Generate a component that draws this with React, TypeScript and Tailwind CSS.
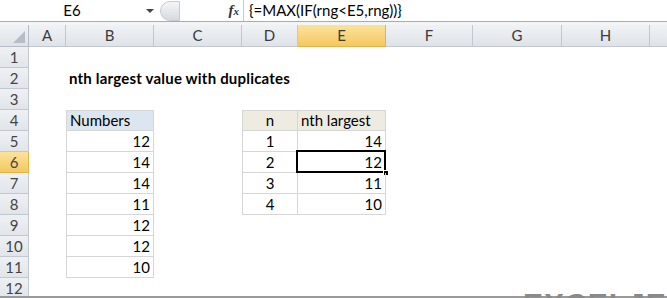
import React from "react";

const cols = [
  { id: "A", w: 37 },
  { id: "B", w: 88 },
  { id: "C", w: 88 },
  { id: "D", w: 56 },
  { id: "E", w: 88 },
  { id: "F", w: 87 },
  { id: "G", w: 89 },
  { id: "H", w: 88 },
  { id: "I", w: 60 },
];

const font = { fontFamily: "Lato, 'Open Sans', sans-serif" };

type CellDef = {
  text?: string;
  align?: "left" | "right" | "center";
  bold?: boolean;
  fill?: string;
  border?: boolean;
  first?: boolean; // left column of a table
  top?: boolean; // header row of a table
  active?: boolean;
};

// sheet contents, keyed by "col+row"
const cells: Record<string, CellDef> = {
  B2: { text: "nth largest value with duplicates", bold: true },
  B4: { text: "Numbers", fill: "bg-[#dce6f1]", border: true, first: true, top: true },
  B5: { text: "12", align: "right", border: true, first: true },
  B6: { text: "14", align: "right", border: true, first: true },
  B7: { text: "14", align: "right", border: true, first: true },
  B8: { text: "11", align: "right", border: true, first: true },
  B9: { text: "12", align: "right", border: true, first: true },
  B10: { text: "12", align: "right", border: true, first: true },
  B11: { text: "10", align: "right", border: true, first: true },
  D4: { text: "n", align: "center", fill: "bg-[#eeece1]", border: true, first: true, top: true },
  E4: { text: "nth largest", fill: "bg-[#eeece1]", border: true, top: true },
  D5: { text: "1", align: "center", border: true, first: true },
  E5: { text: "14", align: "right", border: true },
  D6: { text: "2", align: "center", border: true, first: true },
  E6: { text: "12", align: "right", border: true, active: true },
  D7: { text: "3", align: "center", border: true, first: true },
  E7: { text: "11", align: "right", border: true },
  D8: { text: "4", align: "center", border: true, first: true },
  E8: { text: "10", align: "right", border: true },
};

function Cell({ col, row }: { col: string; row: number }) {
  const c = cells[col + row];
  if (!c) return <div className="h-[21px]" />;
  const justify =
    c.align === "right" ? "justify-end" : c.align === "center" ? "justify-center" : "justify-start";
  return (
    <div
      className={`relative h-[21px] flex items-center px-[3px] text-[15px] text-black whitespace-nowrap ${justify} ${
        c.fill ?? ""
      } ${c.border ? "border-r border-b border-[#d6d6d6]" : ""} ${c.first ? "border-l" : ""} ${
        c.top ? "border-t" : ""
      } ${c.bold ? "font-bold text-[15.5px] tracking-[0.2px]" : ""}`}
      style={font}
    >
      <span>{c.text}</span>
      {c.active && (
        <>
          <div className="absolute -left-[2px] -top-[2px] -right-[1px] -bottom-[1px] border-2 border-black" />
          <div className="absolute -right-[4px] -bottom-[4px] w-[6px] h-[6px] bg-black border border-white" />
        </>
      )}
    </div>
  );
}

export default function App() {
  const rows = Array.from({ length: 12 }, (_, i) => i + 1);
  const template = `29px ${cols.map((c) => c.w + "px").join(" ")}`;

  return (
    <div className="relative w-[667px] h-[298px] overflow-hidden bg-white" style={font}>
      {/* formula bar */}
      <div className="flex h-[22px] items-center border-b border-[#a5acb5] bg-white">
        <div className="relative w-[160px] h-full flex items-center justify-center text-[15px] text-black">
          <span className="ml-[-16px]">E6</span>
          <span className="absolute right-[6px] top-[9px] w-0 h-0 border-l-[4px] border-r-[4px] border-t-[4px] border-l-transparent border-r-transparent border-t-[#444]" />
        </div>
        <div className="w-[20px] h-[20px] rounded-l-full bg-gradient-to-b from-[#f4f5f7] to-[#d6dae0] border border-[#c6cbd2]" />
        <div className="w-[63px] h-full flex items-center justify-end pr-[4px]">
          <span className="text-[15px] italic font-bold text-[#333]" style={{ fontFamily: "'Liberation Serif', serif" }}>
            f<span className="text-[11px]">x</span>
          </span>
        </div>
        <div className="flex-1 h-full flex items-center pl-[5px] border-l border-[#c6cbd2] text-[15px] text-black">
          {"{=MAX(IF(rng<E5,rng))}"}
        </div>
      </div>
      <div className="h-[3px] bg-[#f3f4f6]" />

      {/* sheet */}
      <div className="grid" style={{ gridTemplateColumns: template }}>
        <div className="h-[22px] border-r border-b border-[#b6bcc6] bg-gradient-to-b from-[#f0f2f5] to-[#dfe3e8] relative">
          <span
            className="absolute right-[3px] bottom-[3px] w-0 h-0"
            style={{ borderBottom: "12px solid #b7bdc6", borderLeft: "12px solid transparent" }}
          />
        </div>
        {cols.map((c) => (
          <div
            key={c.id}
            className={`h-[22px] flex items-center justify-center text-[15px] text-[#3b3b3b] border-r border-b ${
              c.id === "E"
                ? "bg-gradient-to-b from-[#fbe39b] to-[#f4c85e] border-[#e3b448]"
                : "bg-gradient-to-b from-[#f0f2f5] to-[#dfe3e8] border-[#c2c8d0]"
            }`}
          >
            {c.id === "I" ? "" : c.id}
          </div>
        ))}

        {rows.map((r) => (
          <React.Fragment key={r}>
            <div
              className={`h-[21px] flex items-center justify-center text-[15px] text-[#444] border-r border-b ${
                r === 6
                  ? "bg-gradient-to-b from-[#fbe39b] to-[#f4c85e] border-[#e3b448]"
                  : "bg-gradient-to-b from-[#eef1f4] to-[#e1e5ea] border-[#c2c8d0]"
              }`}
            >
              {r}
            </div>
            {cols.map((c) => (
              <Cell key={c.id} col={c.id} row={r} />
            ))}
          </React.Fragment>
        ))}
      </div>

      {/* bottom edge */}
      <div className="absolute left-0 right-0 bottom-0 h-[2px] bg-[#9a9a9a]" />

      {/* watermark */}
      <div className="absolute left-[523px] top-[289px] flex items-start gap-[3px]">
        <span className="text-[30px] leading-none font-black tracking-[1px] text-[#8a8a8a]" style={{ fontFamily: "'Liberation Sans', sans-serif" }}>
          EXCELJET
        </span>
        <span className="w-[20px] h-[20px] mt-[4px] bg-[#f5a05a]" />
      </div>
    </div>
  );
}
